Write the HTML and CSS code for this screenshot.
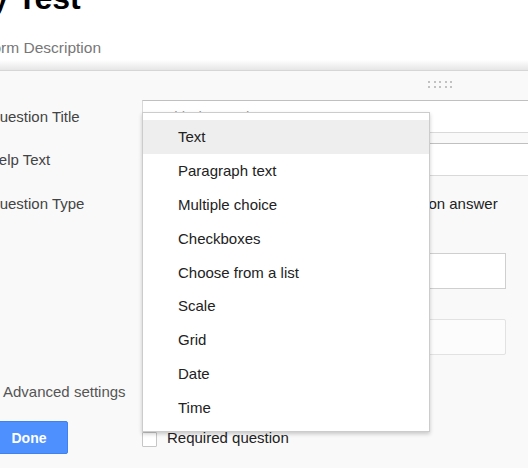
FILE: index.html
```html
<!DOCTYPE html>
<html lang="en">

<head>
    <meta charset="UTF-8">
    <meta name="viewport" content="width=device-width, initial-scale=1.0">
    <title>My Test - Edit question</title>
    <link rel="stylesheet" href="styles.css">
</head>

<body>
    <div class="page">
        <div class="form-header">
            <h1 class="form-title">My Test</h1>
            <div class="form-desc">Form Description</div>
        </div>
        <div class="shade"></div>

        <div class="editor">
            <div class="drag-row">
                <div class="drag-handle">
                    <span></span><span></span><span></span><span></span><span></span>
                    <span></span><span></span><span></span><span></span><span></span>
                </div>
            </div>

            <div class="field-row">
                <label class="field-label">Question Title</label>
                <input class="text-input" type="text" placeholder="Untitled Question">
            </div>
            <div class="field-row">
                <label class="field-label">Help Text</label>
                <input class="text-input" type="text">
            </div>
            <div class="field-row type-row">
                <label class="field-label">Question Type</label>
                <div class="type-controls">
                    <div class="type-select">Text</div>
                    <label class="page-nav"><input type="checkbox"> Go to page based on answer</label>
                </div>
            </div>

            <div class="preview">
                <div class="preview-box"></div>
                <div class="preview-box faint"></div>
            </div>

            <div class="advanced">Advanced settings</div>

            <div class="footer-row">
                <button class="done-btn">Done</button>
                <label class="required"><span class="checkbox"></span>Required question</label>
            </div>

            <ul class="type-menu">
                <li class="active">Text</li>
                <li>Paragraph text</li>
                <li>Multiple choice</li>
                <li>Checkboxes</li>
                <li>Choose from a list</li>
                <li>Scale</li>
                <li>Grid</li>
                <li>Date</li>
                <li>Time</li>
            </ul>
        </div>
    </div>
</body>

</html>
```

FILE: styles.css
```css
html,
body {
    margin: 0;
    padding: 0;
    overflow: hidden;
}

body {
    font-family: "Liberation Sans", Arial, sans-serif;
    background-color: #fff;
    color: #222;
    width: 528px;
    height: 468px;
}

.page {
    margin-left: -12px;
}

.form-header {
    display: flow-root;
    height: 60px;
}

.form-title {
    margin: -18px 0 0 -24px;
    font-size: 32px;
    line-height: 32px;
    font-weight: bold;
    color: #000;
}

.form-desc {
    margin: 24px 0 0 -5px;
    font-size: 15.5px;
    line-height: 20px;
    color: #777;
}

.shade {
    height: 10px;
    background: linear-gradient(#fff, #e6e6e6);
    border-bottom: 1px solid #d6d6d6;
}

.editor {
    position: relative;
    background-color: #f9f9f9;
    height: 420px;
}

.drag-row {
    height: 29px;
    display: flex;
    align-items: center;
    justify-content: flex-end;
    padding-right: 76px;
}

.drag-handle {
    display: grid;
    grid-template-columns: repeat(5, 2px);
    grid-auto-rows: 2px;
    column-gap: 3.5px;
    row-gap: 3px;
    margin-top: -3px;
}

.drag-handle span {
    background-color: #c2c2c2;
}

.field-row {
    display: flex;
    align-items: center;
    margin-bottom: 10px;
}

.field-label {
    width: 154px;
    flex-shrink: 0;
    font-size: 15px;
    color: #444;
}

.text-input {
    box-sizing: border-box;
    width: 460px;
    flex-shrink: 0;
    height: 33px;
    padding: 0 8px;
    font-family: inherit;
    font-size: 15px;
    border: 1px solid #d9d9d9;
    border-top-color: #c0c0c0;
    background-color: #fff;
    outline: none;
}

.text-input::placeholder {
    color: #999;
}

.type-row {
    height: 34px;
}

.type-controls {
    display: flex;
    align-items: center;
    gap: 14px;
}

.type-select {
    width: 120px;
    height: 27px;
    border: 1px solid #ccc;
    background-color: #f3f3f3;
    font-size: 13px;
    line-height: 27px;
    padding-left: 8px;
}

.page-nav {
    font-size: 15px;
    color: #222;
    display: flex;
    align-items: center;
    gap: 6px;
}

.page-nav input {
    margin: 0;
}

.preview {
    margin: 33px 0 0 290px;
    display: flex;
    flex-direction: column;
    gap: 30px;
}

.preview-box {
    width: 228px;
    height: 36px;
    box-sizing: border-box;
    border: 1px solid #cfcfcf;
    background-color: #fff;
}

.preview-box.faint {
    border-color: #e2e2e2;
    border-radius: 2px;
    background-color: #fcfcfc;
}

.advanced {
    margin-top: 27px;
    padding-left: 15px;
    font-size: 15px;
    line-height: 20px;
    color: #555;
}

.footer-row {
    display: flex;
    align-items: center;
    margin-top: 19px;
}

.done-btn {
    width: 80px;
    height: 33px;
    margin-right: 74px;
    padding: 0 0 0 2px;
    border: 1px solid #3d82f0;
    border-radius: 2px;
    background-color: #4d90fe;
    color: #fff;
    font-family: inherit;
    font-size: 14px;
    font-weight: bold;
    cursor: pointer;
}

.required {
    display: flex;
    align-items: center;
    font-size: 15px;
    color: #222;
}

.checkbox {
    width: 13px;
    height: 13px;
    border: 1px solid #c6c6c6;
    border-radius: 1px;
    background-color: #fff;
    margin-right: 10px;
    margin-top: 3px;
}

.type-menu {
    position: absolute;
    top: 41px;
    left: 154px;
    width: 286px;
    margin: 0;
    padding: 7px 0 6px;
    list-style: none;
    background-color: #fff;
    border: 1px solid rgba(0, 0, 0, 0.2);
    box-shadow: 0 2px 4px rgba(0, 0, 0, 0.2);
}

.type-menu li {
    height: 33.875px;
    line-height: 33.875px;
    padding-left: 35px;
    font-size: 15px;
    color: #222;
    cursor: default;
}

.type-menu li.active {
    background-color: #eee;
}
```
